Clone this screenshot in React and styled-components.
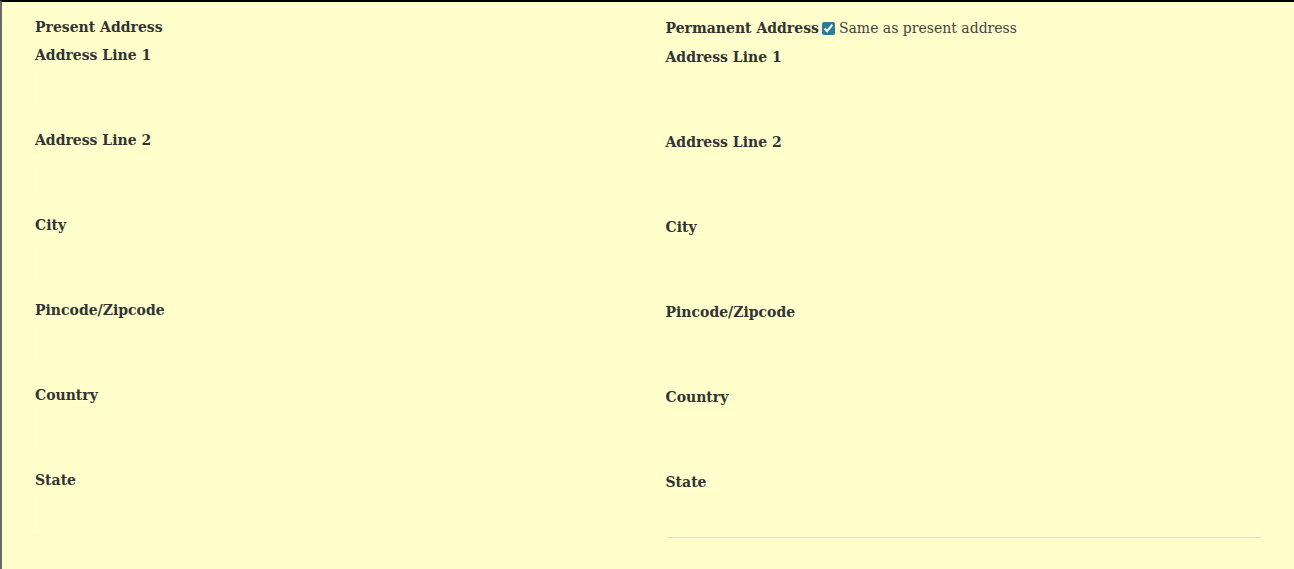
import React from "react";
import styled, { createGlobalStyle } from "styled-components";

const GlobalStyle = createGlobalStyle`
  html, body {
    margin: 0;
    padding: 0;
    background-color: #ffffcc;
  }
`;

const Frame = styled.div`
  box-sizing: border-box;
  min-height: 569px;
  border-top: 2px solid #000;
  border-left: 2px solid #6a6a6a;
  background-color: #ffffcc;
  padding: 15px 32px 0 31px;
  display: grid;
  grid-template-columns: 1fr 1fr;
  column-gap: 36px;
  font-family: "DejaVu Serif", "Liberation Serif", serif;
  color: #333;
`;

const Column = styled.div`
  display: flex;
  flex-direction: column;
`;

const Heading = styled.div`
  display: flex;
  align-items: center;
  height: ${(p) => (p.$tall ? "22px" : "20px")};
  margin-bottom: 8px;
  padding-left: ${(p) => (p.$tall ? "0" : "2px")};
  font-size: 14px;
  font-weight: 700;
  white-space: nowrap;
`;

const SameLabel = styled.label`
  display: inline-flex;
  align-items: center;
  font-weight: 400;
  font-size: 14px;
  color: #444;
`;

const Check = styled.input`
  width: 13px;
  height: 13px;
  margin: 0 4px 0 3px;
  accent-color: #2a7d9c;
`;

const Field = styled.div`
  display: flex;
  flex-direction: column;
  margin-bottom: 19px;
`;

const Label = styled.label`
  height: 20px;
  line-height: 20px;
  margin-bottom: 2px;
  padding-left: ${(p) => (p.$shift ? "2px" : "0")};
  font-size: 14px;
  font-weight: 700;
  white-space: nowrap;
`;

const Input = styled.input`
  box-sizing: border-box;
  width: 100%;
  height: 44px;
  padding: 6px 12px;
  background-color: transparent;
  border: 1px solid rgba(225, 225, 170, 0.1);
  border-bottom-color: ${(p) => (p.$underline ? "#e3e3c9" : "rgba(225, 225, 170, 0.1)")};
  outline: none;
  font-family: inherit;
  font-size: 14px;
  color: #333;
`;

const fields = [
  "Address Line 1",
  "Address Line 2",
  "City",
  "Pincode/Zipcode",
  "Country",
  "State",
];

export default function App() {
  return (
    <>
      <GlobalStyle />
      <Frame>
        <Column>
          <Heading>Present Address</Heading>
          {fields.map((f) => (
            <Field key={f}>
              <Label $shift>{f}</Label>
              <Input type="text" />
            </Field>
          ))}
        </Column>
        <Column>
          <Heading $tall>
            Permanent Address
            <SameLabel>
              <Check type="checkbox" defaultChecked />
              Same as present address
            </SameLabel>
          </Heading>
          {fields.map((f, i) => (
            <Field key={f}>
              <Label>{f}</Label>
              <Input type="text" $underline={i === fields.length - 1} />
            </Field>
          ))}
        </Column>
      </Frame>
    </>
  );
}
